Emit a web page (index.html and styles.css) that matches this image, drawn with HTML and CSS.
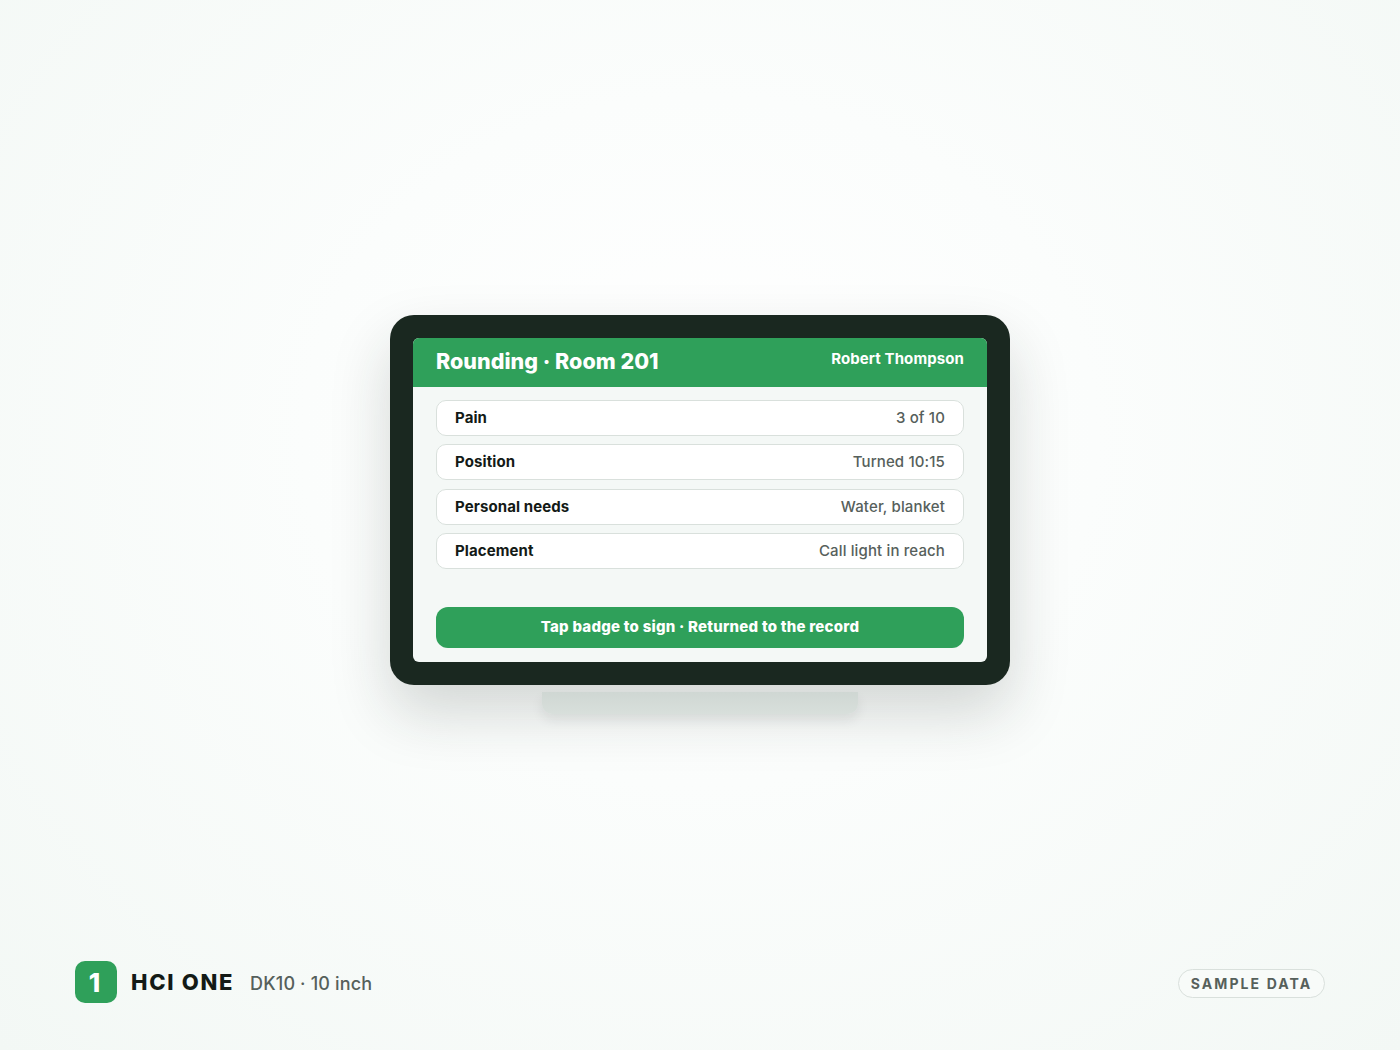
FILE: index.html
```html
<!DOCTYPE html>
<html lang="en">
<head>
    <meta charset="UTF-8">
    <meta name="viewport" content="width=device-width, initial-scale=1.0">
    <title>Rounding - Room 201</title>
    <link rel="stylesheet" href="styles.css">
</head>
<body>
    <main class="stage">
        <div class="device">
            <div class="screen">
                <div class="screen-header">
                    <h1>Rounding · Room 201</h1>
                    <span class="patient">Robert Thompson</span>
                </div>
                <div class="screen-body">
                    <div class="rows">
                        <div class="row"><span class="row-label">Pain</span><span class="row-value">3 of 10</span></div>
                        <div class="row"><span class="row-label">Position</span><span class="row-value">Turned 10:15</span></div>
                        <div class="row"><span class="row-label">Personal needs</span><span class="row-value">Water, blanket</span></div>
                        <div class="row"><span class="row-label">Placement</span><span class="row-value">Call light in reach</span></div>
                    </div>
                    <div class="sign-button">Tap badge to sign · Returned to the record</div>
                </div>
            </div>
        </div>
        <div class="stand"></div>
    </main>
    <footer class="footer">
        <div class="brand">
            <div class="brand-mark">1</div>
            <span class="brand-name">HCI ONE</span>
            <span class="brand-model">DK10 · 10 inch</span>
        </div>
        <div class="sample-pill">SAMPLE DATA</div>
    </footer>
</body>
</html>
```

FILE: styles.css
```css
* {
    box-sizing: border-box;
}
body {
    margin: 0;
    height: 1050px;
    display: flex;
    flex-direction: column;
    font-family: Inter, "Open Sans", sans-serif;
    background: radial-gradient(ellipse at 50% 42%, #ffffff 0%, #fbfdfc 40%, #f3f8f5 100%);
    overflow: hidden;
}
.stage {
    flex: 1;
    display: flex;
    flex-direction: column;
    align-items: center;
    padding-top: 315px;
}
.device {
    width: 620px;
    height: 370px;
    padding: 23px;
    background: #1a2820;
    border-radius: 24px;
    box-shadow: 0 28px 60px rgba(26, 40, 32, 0.18);
}
.screen {
    height: 100%;
    display: flex;
    flex-direction: column;
    background: #f4f8f6;
    border-radius: 6px;
    overflow: hidden;
}
.screen-header {
    height: 49px;
    flex-shrink: 0;
    display: flex;
    justify-content: space-between;
    padding: 0 23px;
    background: #2fa05a;
    color: #fff;
}
.screen-header h1 {
    margin: 11px 0 0;
    font-size: 21.5px;
    line-height: 25px;
    font-weight: 800;
    letter-spacing: 0.02px;
}
.patient {
    margin-top: 12px;
    font-size: 15px;
    line-height: 18px;
    font-weight: 700;
    letter-spacing: 0.1px;
}
.screen-body {
    flex: 1;
    display: flex;
    flex-direction: column;
    justify-content: space-between;
    padding: 13px 23px 14px;
}
.rows {
    display: flex;
    flex-direction: column;
    gap: 8.4px;
}
.row {
    height: 36px;
    display: flex;
    justify-content: space-between;
    align-items: center;
    padding: 0 18px 1.4px;
    background: #fff;
    border: 1px solid #d9e0dc;
    border-radius: 10px;
    font-size: 15px;
}
.row-label {
    font-weight: 700;
    color: #131a16;
    letter-spacing: 0.1px;
}
.row-value {
    font-weight: 500;
    color: #56605b;
    letter-spacing: 0.13px;
}
.sign-button {
    height: 41px;
    display: flex;
    justify-content: center;
    align-items: center;
    padding-bottom: 3px;
    background: #2fa05a;
    color: #fff;
    border-radius: 12px;
    font-size: 15px;
    font-weight: 800;
    letter-spacing: 0.23px;
}
.stand {
    width: 316px;
    height: 22px;
    margin-top: 7px;
    background: linear-gradient(#cfd7d3, #d8dfdb);
    border-radius: 0 0 10px 10px;
    box-shadow: 0 6px 12px rgba(26, 40, 32, 0.08);
}
.footer {
    display: flex;
    justify-content: space-between;
    align-items: center;
    padding: 0 75px 47px;
}
.brand {
    display: flex;
    align-items: center;
}
.brand-mark {
    width: 42px;
    height: 42px;
    display: flex;
    justify-content: center;
    align-items: center;
    padding-right: 3px;
    background: #2fa05a;
    color: #fff;
    border-radius: 10px;
    font-size: 26px;
    font-weight: 800;
}
.brand-name {
    margin-left: 14px;
    font-size: 22px;
    font-weight: 800;
    letter-spacing: 1.7px;
    color: #131a16;
}
.brand-model {
    margin-left: 16px;
    margin-top: 2px;
    font-size: 18px;
    font-weight: 500;
    color: #56605b;
    letter-spacing: 0.15px;
}
.sample-pill {
    width: 147px;
    height: 29px;
    margin-top: 2px;
    display: flex;
    justify-content: center;
    align-items: center;
    background: #f8fbf9;
    border: 1px solid #d9e0dc;
    border-radius: 15px;
    font-size: 14px;
    font-weight: 700;
    letter-spacing: 2.1px;
    color: #56605b;
}
```
